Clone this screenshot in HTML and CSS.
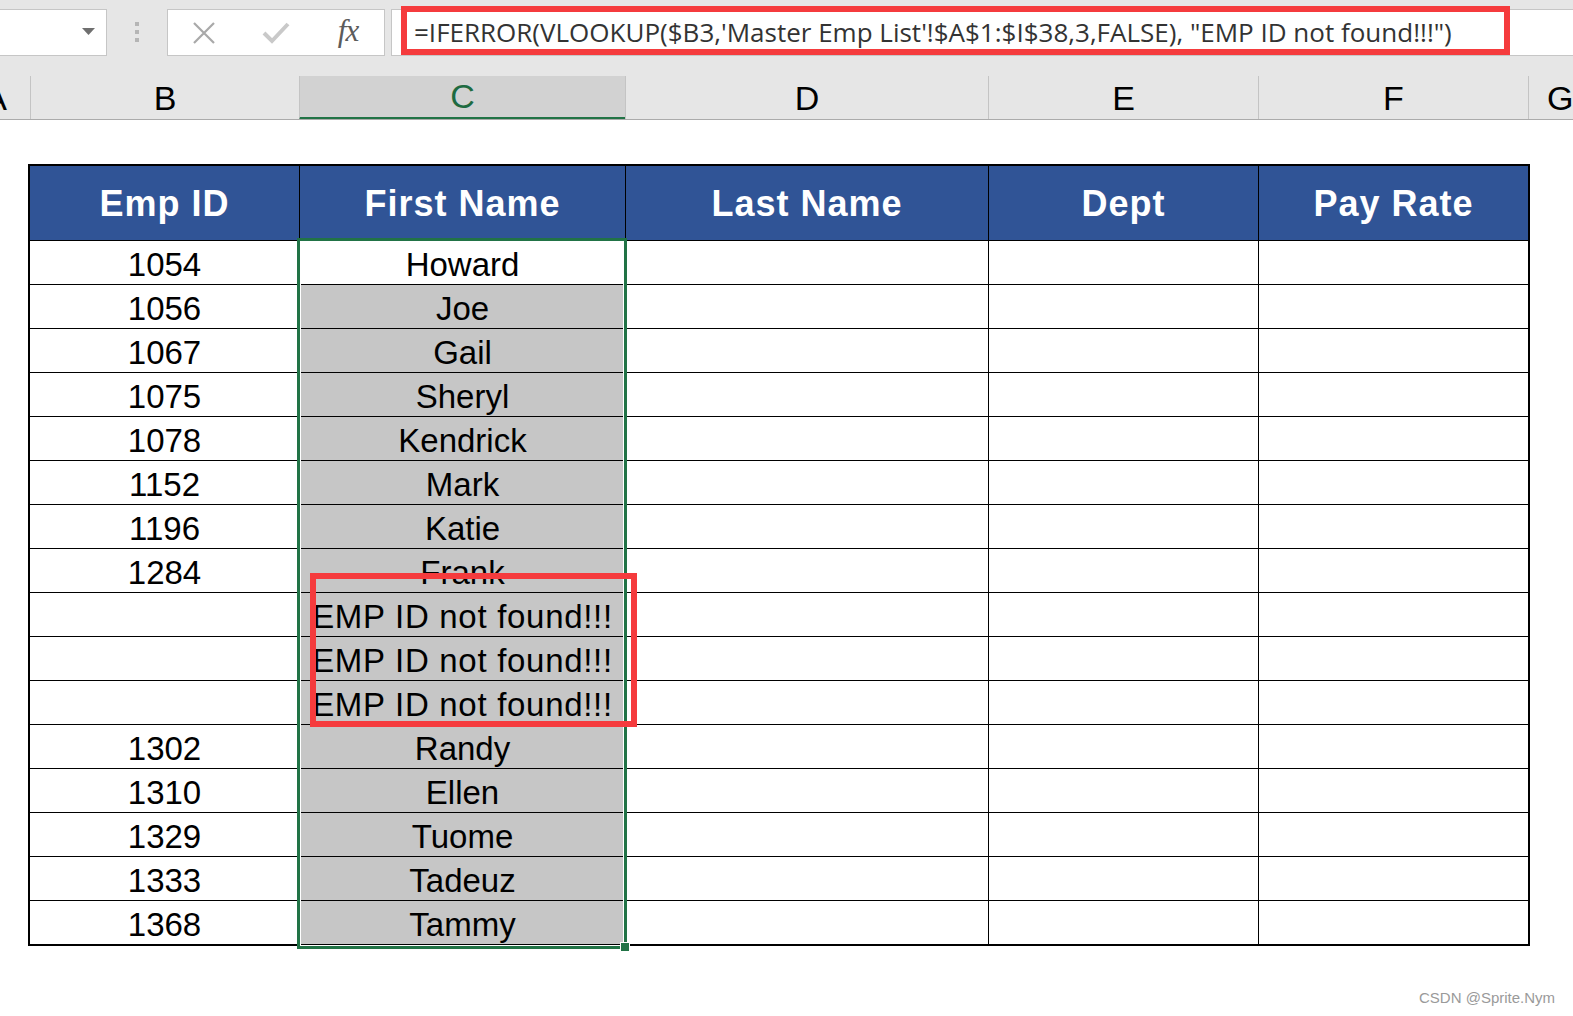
FILE: index.html
```html
<!DOCTYPE html>
<html>
<head>
<meta charset="utf-8">
<link rel="stylesheet" href="styles.css">
</head>
<body>
<div class="toolbar">
  <div class="namebox">
    <svg class="tri" width="13" height="7" viewBox="0 0 13 7"><path d="M0 0H13L6.5 7Z" fill="#6f6f6f"/></svg>
  </div>
  <div class="grip"><span></span><span></span><span></span></div>
  <div class="fxbox">
    <div class="fxicon"><svg width="24" height="22" viewBox="0 0 24 22"><path d="M2 1L22 21M22 1L2 21" stroke="#a9a9a9" stroke-width="2.2" fill="none"/></svg></div>
    <div class="fxicon"><svg width="28" height="22" viewBox="0 0 28 22"><path d="M2 11L10 19L26 2" stroke="#c9c9c9" stroke-width="4" fill="none"/></svg></div>
    <div class="fxicon fx">fx</div>
  </div>
  <div class="formula">=IFERROR(VLOOKUP($B3,'Master Emp List'!$A$1:$I$38,3,FALSE), "EMP ID not found!!!")</div>
  <div class="hl hl-formula"></div>
</div>

<div class="colheads">
  <div class="ch ch-a">A</div>
  <div class="ch">B</div>
  <div class="ch ch-sel">C</div>
  <div class="ch">D</div>
  <div class="ch">E</div>
  <div class="ch">F</div>
  <div class="ch ch-g">G</div>
</div>

<div class="sheet">
  <div class="grid">
    <div class="th">Emp ID</div><div class="th">First Name</div><div class="th">Last Name</div><div class="th">Dept</div><div class="th">Pay Rate</div>

    <div class="td">1054</div><div class="td active">Howard</div><div class="td"></div><div class="td"></div><div class="td"></div>
    <div class="td">1056</div><div class="td sel">Joe</div><div class="td"></div><div class="td"></div><div class="td"></div>
    <div class="td">1067</div><div class="td sel">Gail</div><div class="td"></div><div class="td"></div><div class="td"></div>
    <div class="td">1075</div><div class="td sel">Sheryl</div><div class="td"></div><div class="td"></div><div class="td"></div>
    <div class="td">1078</div><div class="td sel">Kendrick</div><div class="td"></div><div class="td"></div><div class="td"></div>
    <div class="td">1152</div><div class="td sel">Mark</div><div class="td"></div><div class="td"></div><div class="td"></div>
    <div class="td">1196</div><div class="td sel">Katie</div><div class="td"></div><div class="td"></div><div class="td"></div>
    <div class="td">1284</div><div class="td sel">Frank</div><div class="td"></div><div class="td"></div><div class="td"></div>
    <div class="td"></div><div class="td sel err">EMP ID not found!!!</div><div class="td"></div><div class="td"></div><div class="td"></div>
    <div class="td"></div><div class="td sel err">EMP ID not found!!!</div><div class="td"></div><div class="td"></div><div class="td"></div>
    <div class="td"></div><div class="td sel err">EMP ID not found!!!</div><div class="td"></div><div class="td"></div><div class="td"></div>
    <div class="td">1302</div><div class="td sel">Randy</div><div class="td"></div><div class="td"></div><div class="td"></div>
    <div class="td">1310</div><div class="td sel">Ellen</div><div class="td"></div><div class="td"></div><div class="td"></div>
    <div class="td">1329</div><div class="td sel">Tuome</div><div class="td"></div><div class="td"></div><div class="td"></div>
    <div class="td">1333</div><div class="td sel">Tadeuz</div><div class="td"></div><div class="td"></div><div class="td"></div>
    <div class="td">1368</div><div class="td sel">Tammy</div><div class="td"></div><div class="td"></div><div class="td"></div>
  </div>
  <div class="selection"></div>
  <div class="handle"></div>
  <div class="hl hl-cells"></div>
</div>

<div class="watermark">CSDN @Sprite.Nym</div>
</body>
</html>
```

FILE: styles.css
```css
html, body {
  margin: 0;
  padding: 0;
}
body {
  width: 1573px;
  height: 1016px;
  overflow: hidden;
  background: #ffffff;
  position: relative;
  font-family: "Liberation Sans", Arial, sans-serif;
}

/* ---------- formula bar ---------- */
.toolbar {
  position: relative;
  height: 76px;
  box-sizing: border-box;
  padding-top: 9px;
  background: #e6e6e6;
  display: flex;
  align-items: flex-start;
}
.namebox {
  width: 108px;
  height: 47px;
  box-sizing: border-box;
  margin-left: -1px;
  background: #fff;
  border: 1px solid #c6c6c6;
  display: flex;
  align-items: center;
  justify-content: flex-end;
  padding-right: 11px;
  padding-bottom: 3px;
}
.grip {
  width: 60px;
  height: 47px;
  display: flex;
  flex-direction: column;
  align-items: center;
  justify-content: center;
  gap: 4px;
  padding-bottom: 2px;
  box-sizing: border-box;
}
.grip span {
  width: 4px;
  height: 4px;
  background: #b5b5b5;
}
.fxbox {
  width: 218px;
  height: 47px;
  box-sizing: border-box;
  background: #fff;
  border: 1px solid #c6c6c6;
  display: grid;
  grid-template-columns: 72px 72px 72px;
  align-items: center;
  justify-items: center;
}
.fxicon {
  display: flex;
  align-items: center;
  justify-content: center;
}
.fx {
  font-family: "Liberation Serif", "Times New Roman", serif;
  font-style: italic;
  font-size: 31px;
  color: #5c5c5c;
  padding-bottom: 3px;
  letter-spacing: -1px;
}
.formula {
  flex: 1;
  margin-left: 6px;
  margin-right: -2px;
  height: 47px;
  box-sizing: border-box;
  background: #fff;
  border: 1px solid #c6c6c6;
  padding-left: 22px;
  padding-top: 7px;
  font-family: "Open Sans", "Noto Sans", sans-serif;
  font-size: 26px;
  line-height: 30px;
  color: #333333;
  white-space: nowrap;
  overflow: hidden;
}
.hl {
  position: absolute;
  box-sizing: border-box;
  border: 6px solid #f53b3d;
}
.hl-formula {
  left: 401px;
  top: 6px;
  width: 1109px;
  height: 49px;
}

/* ---------- column headers ---------- */
.colheads {
  display: grid;
  grid-template-columns: 30px 269px 326px 363px 270px 270px 1fr;
  height: 44px;
  box-sizing: border-box;
  background: #e6e6e6;
  border-bottom: 1px solid #ababab;
  overflow: hidden;
}
.ch {
  border-left: 1px solid #c4c4c4;
  display: flex;
  align-items: center;
  justify-content: center;
  font-size: 34px;
  color: #000;
  padding-top: 1px;
}
.ch-a {
  border-left: none;
  justify-content: flex-end;
  padding-right: 23px;
  overflow: visible;
  white-space: nowrap;
}
.ch-g {
  justify-content: flex-start;
  padding-left: 18px;
}
.ch-sel {
  background: #d2d2d2;
  color: #1e6b41;
  border-bottom: 3px solid #217346;
  margin-bottom: -1px;
  padding-top: 0;
}

/* ---------- sheet ---------- */
.sheet {
  position: relative;
  padding-top: 44px;
  padding-left: 28px;
}
.grid {
  display: grid;
  grid-template-columns: 269px 325px 362px 269px 269px;
  grid-template-rows: 74px repeat(16, 43px);
  gap: 1px;
  width: max-content;
  background: #000;
  border: 2px solid #000;
}
.th {
  background: #305496;
  color: #fff;
  font-weight: bold;
  font-size: 36px;
  letter-spacing: 1px;
  display: flex;
  align-items: center;
  justify-content: center;
  padding-top: 2px;
}
.td {
  background: #fff;
  color: #000;
  font-size: 33px;
  display: flex;
  align-items: center;
  justify-content: center;
  padding-top: 4px;
  white-space: nowrap;
  overflow: hidden;
}
.td.sel {
  background: #c6c6c6;
}
.td.err {
  letter-spacing: 0.7px;
}
.selection {
  position: absolute;
  left: 297px;
  top: 118px;
  width: 330px;
  height: 711px;
  box-sizing: border-box;
  border: 3px solid #217346;
  box-shadow: inset 0 0 0 1px #ffffff;
}
.handle {
  position: absolute;
  left: 620px;
  top: 822px;
  width: 8px;
  height: 8px;
  background: #217346;
  border: 1px solid #ffffff;
}
.hl-cells {
  left: 310px;
  top: 453px;
  width: 327px;
  height: 154px;
}

.watermark {
  position: absolute;
  left: 1419px;
  top: 989px;
  font-size: 15px;
  color: #9a9a9a;
  white-space: nowrap;
}
```
